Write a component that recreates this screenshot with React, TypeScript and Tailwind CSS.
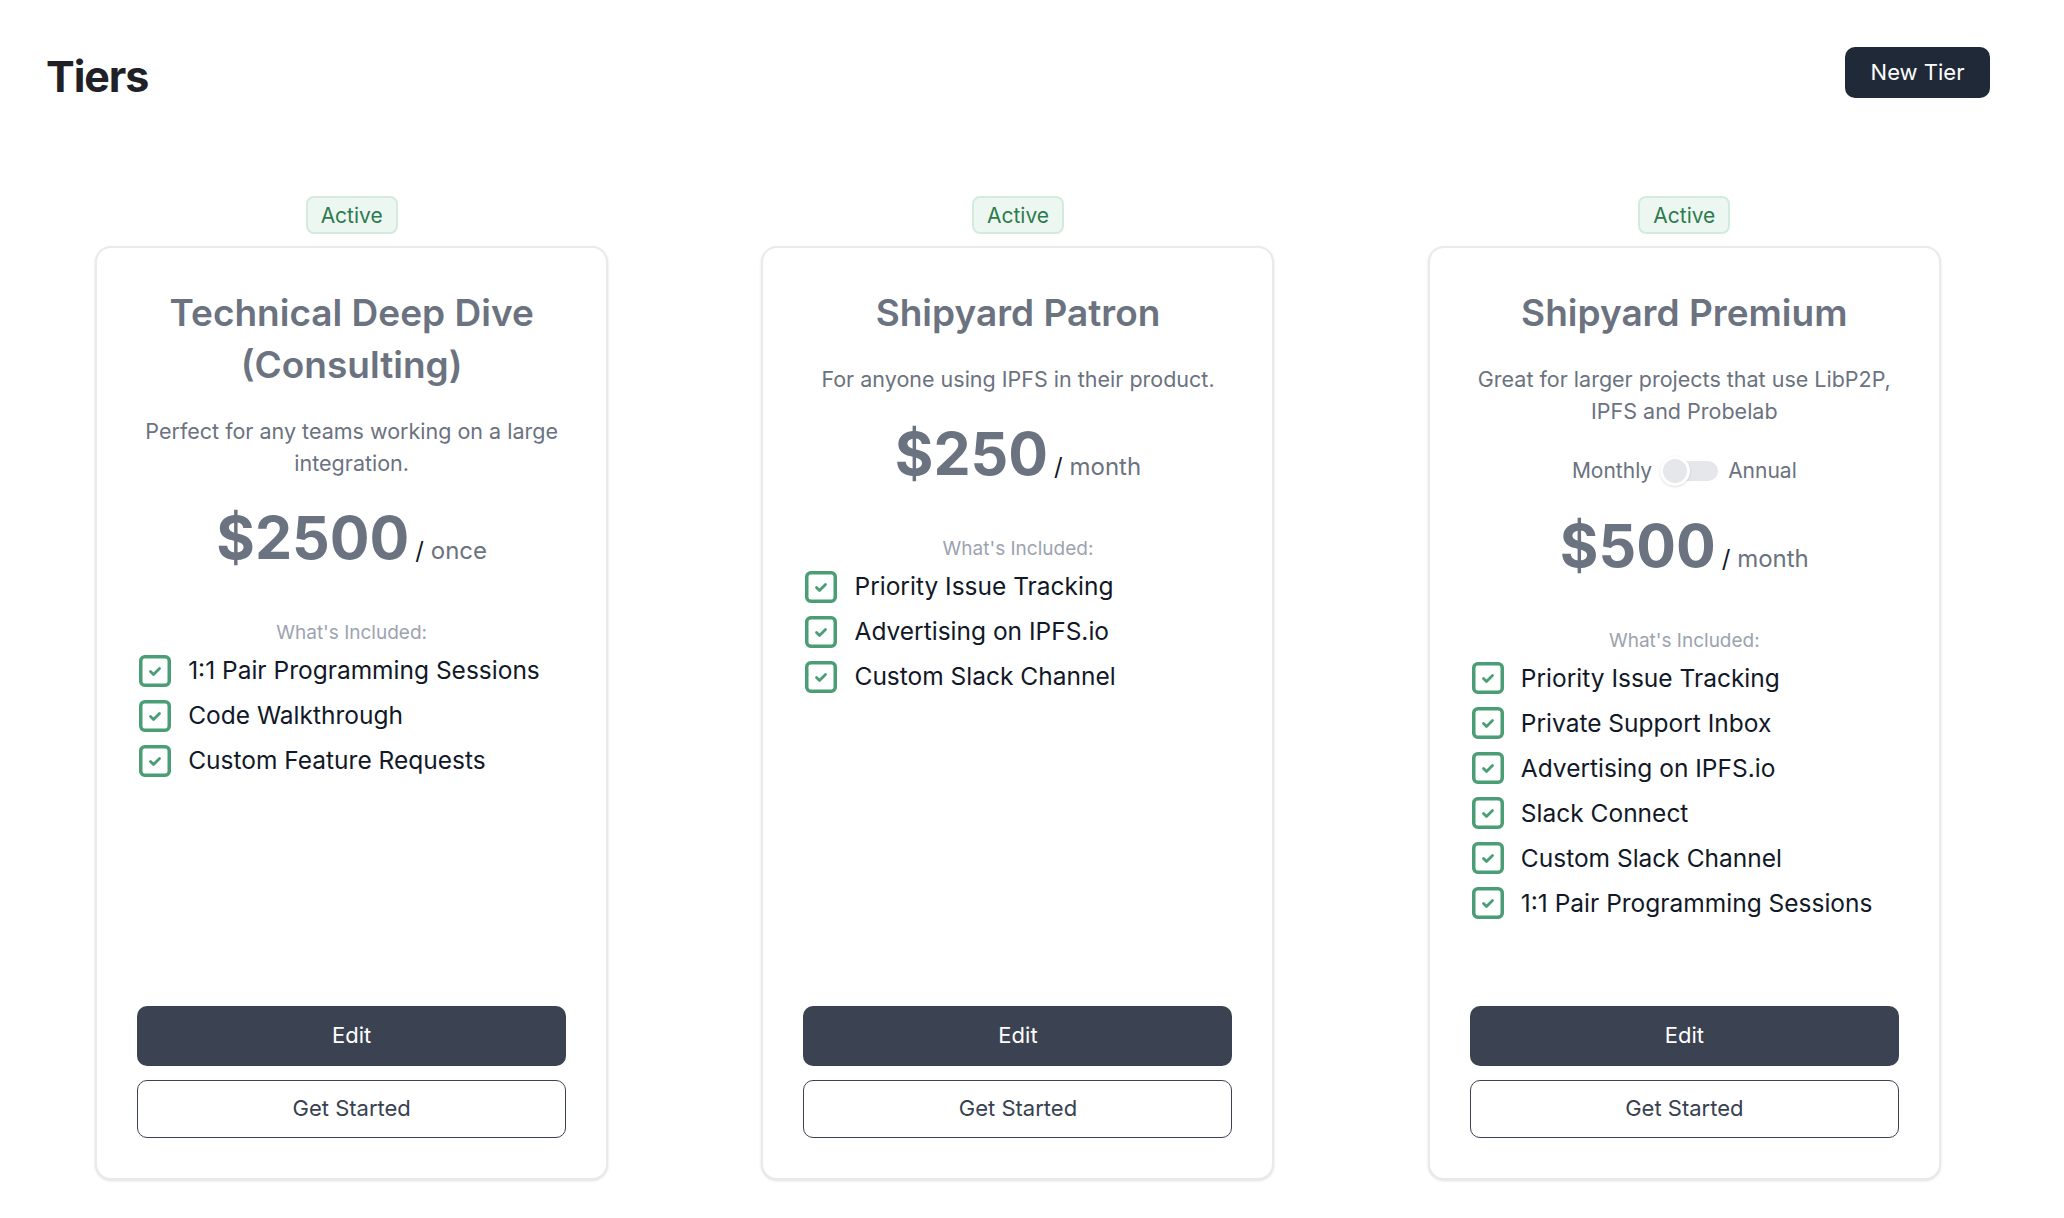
import React from 'react';

interface Tier {
  name: string;
  description: string;
  price: string;
  period: string;
  features: string[];
  toggle?: boolean;
}

const TIERS: Tier[] = [
  {
    name: 'Technical Deep Dive (Consulting)',
    description: 'Perfect for any teams working on a large integration.',
    price: '$2500',
    period: 'once',
    features: ['1:1 Pair Programming Sessions', 'Code Walkthrough', 'Custom Feature Requests'],
  },
  {
    name: 'Shipyard Patron',
    description: 'For anyone using IPFS in their product.',
    price: '$250',
    period: 'month',
    features: ['Priority Issue Tracking', 'Advertising on IPFS.io', 'Custom Slack Channel'],
  },
  {
    name: 'Shipyard Premium',
    description: 'Great for larger projects that use LibP2P, IPFS and Probelab',
    price: '$500',
    period: 'month',
    toggle: true,
    features: [
      'Priority Issue Tracking',
      'Private Support Inbox',
      'Advertising on IPFS.io',
      'Slack Connect',
      'Custom Slack Channel',
      '1:1 Pair Programming Sessions',
    ],
  },
];

const CheckBox = () => (
  <svg width="32" height="32" viewBox="0 0 32 32" className="shrink-0 ml-[2px]">
    <rect x="1.75" y="1.75" width="28.5" height="28.5" rx="4" fill="none" stroke="#4a9e76" strokeWidth="3.5" />
    <path d="M11.5 16.5l3 3 6-6" fill="none" stroke="#4a9e76" strokeWidth="2.8" strokeLinecap="round" strokeLinejoin="round" />
  </svg>
);

const TierCard: React.FC<{ tier: Tier }> = ({ tier }) => (
  <div className="flex flex-col items-center">
    <span className="h-[38px] px-[13px] flex items-center rounded-lg border-2 border-[#d3ebdd] bg-[#edf7f1] text-[21px] text-[#2f7a4f] leading-none">
      Active
    </span>
    <div className="mt-3 w-[513px] flex-1 flex flex-col rounded-2xl border-2 border-[#e9eaee] bg-white shadow-sm px-[40px] pt-[39px] pb-[40px]">
      <h2 className="text-center text-[37px] leading-[52px] font-semibold text-[#6b7280] px-4">{tier.name}</h2>
      <p className="mt-6 text-center text-[21.5px] leading-[32px] text-[#6b7280]">{tier.description}</p>
      {tier.toggle && (
        <div className="mt-7 flex items-center justify-center gap-[10px] text-[21px] text-[#6b7280]">
          <span>Monthly</span>
          <span className="relative w-[56px] h-[20px] rounded-full bg-[#e5e7eb]">
            <span className="absolute -left-[2px] -top-[5px] w-[30px] h-[30px] rounded-full bg-[#e5e7eb] border-[3px] border-white shadow" />
          </span>
          <span>Annual</span>
        </div>
      )}
      <div className="mt-[29px] flex items-baseline justify-center gap-[6px]">
        <span className="text-[59px] leading-[60px] font-bold text-[#6b7280]">{tier.price}</span>
        <span className="text-[24px] text-[#6b7280]">
          <span className="text-[#111827]">/</span> {tier.period}
        </span>
      </div>
      <p className="mt-[50px] text-center text-[19px] leading-[28px] text-[#9ca3af]">What's Included:</p>
      <ul className="mt-[1px] flex flex-col">
        {tier.features.map(f => (
          <li key={f} className="h-[45px] flex items-center gap-[17px] text-[24.5px] text-[#111827]">
            <CheckBox />
            <span>{f}</span>
          </li>
        ))}
      </ul>
      <div className="mt-auto pt-20 flex flex-col gap-[14px]">
        <button className="h-[60px] rounded-[10px] bg-[#3b4252] text-white text-[22px]">Edit</button>
        <button className="h-[58px] rounded-[10px] border border-[#3b4252] bg-white text-[#374151] text-[22px]">
          Get Started
        </button>
      </div>
    </div>
  </div>
);

export default function App() {
  return (
    <div className="min-h-screen bg-white pl-[46px] pr-[74px] pt-[47px] pb-10" style={{ fontFamily: 'Inter, "Noto Sans", sans-serif' }}>
      <div className="flex items-center justify-between">
        <h1 className="text-[43px] leading-none font-bold tracking-tight text-[#1f2126] mt-[8px]">Tiers</h1>
        <button className="h-[51px] w-[145px] rounded-[10px] bg-[#1f2937] text-white text-[22px]">New Tier</button>
      </div>
      <div className="mt-[98px] grid grid-cols-3 gap-[55px] items-stretch">
        {TIERS.map(t => (
          <TierCard key={t.name} tier={t} />
        ))}
      </div>
    </div>
  );
}
